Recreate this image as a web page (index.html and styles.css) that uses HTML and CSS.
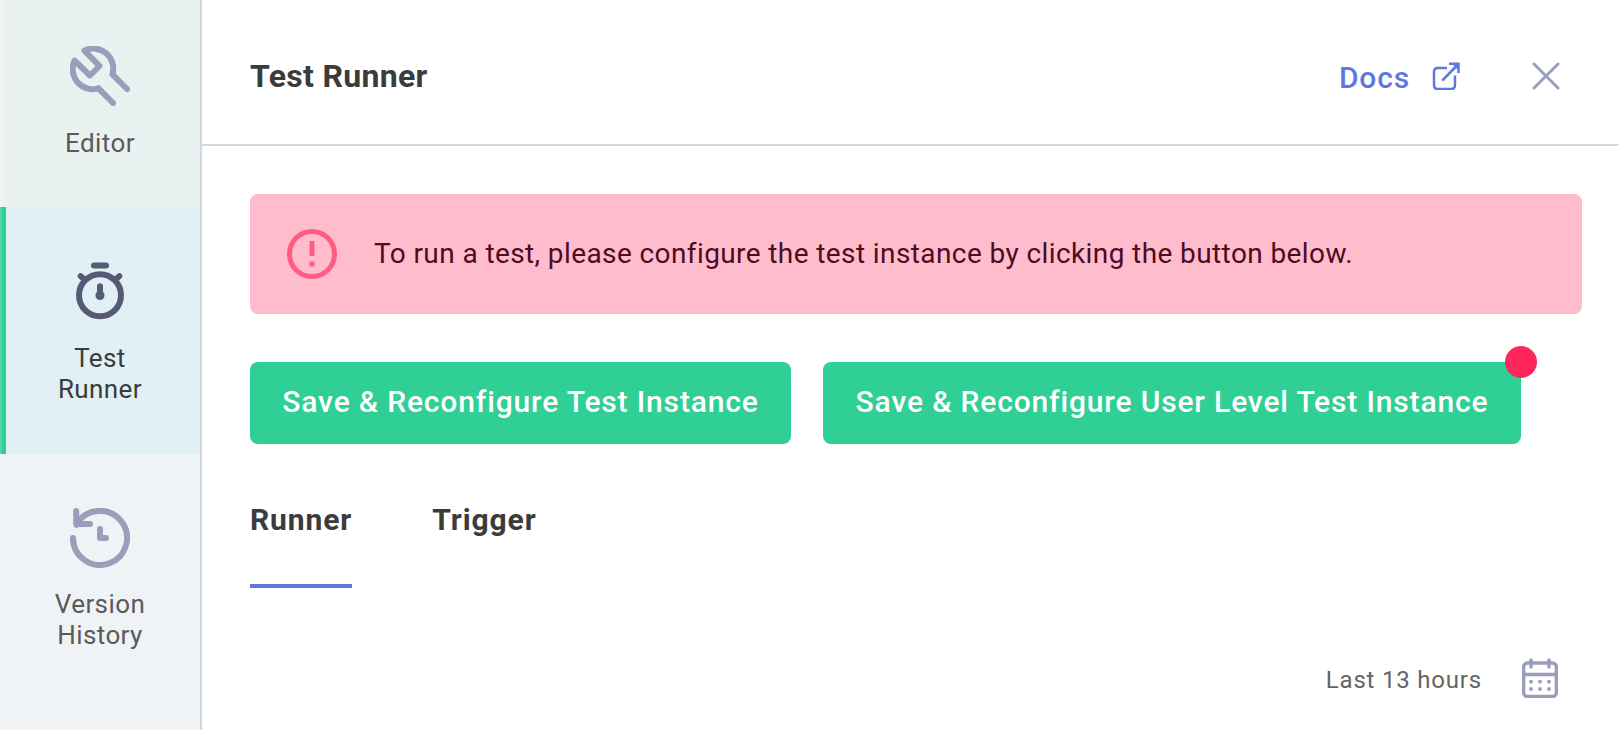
FILE: index.html
```
<!DOCTYPE html>
<html lang="en">
<head>
<meta charset="utf-8">
<title>Test Runner</title>
<link rel="stylesheet" href="styles.css">
</head>
<body>
<div class="app">
  <nav class="sidebar">
    <a class="nav-item nav-editor">
      <svg class="nav-icon" viewBox="0 0 60 60"><path d="M28.5 42.3A20 20 0 0 1 4.6 14.6L20 29.5 29.5 20 14.4 4.6A20 20 0 0 1 42.4 28.3L57 43M28.5 42.3L43 57"/></svg>
      <span>Editor</span>
    </a>
    <a class="nav-item nav-runner">
      <svg class="nav-icon" viewBox="0 0 60 60"><circle cx="30" cy="33.3" r="21"/><path d="M24 3.5H36M10.7 14.1L15 18M49.3 14.1L45 18M30 24.3V33"/><circle class="solid" cx="30" cy="33.5" r="4.5"/></svg>
      <span>Test<br>Runner</span>
    </a>
    <a class="nav-item nav-history">
      <svg class="nav-icon" viewBox="0 0 60 60"><path d="M3 30A27 27 0 1 0 6.4 16.8M6.2 3V16H20M30 21V30H36"/></svg>
      <span>Version<br>History</span>
    </a>
  </nav>
  <main class="main">
    <header class="header">
      <h1 class="title">Test Runner</h1>
      <a class="docs"><span class="docs-label">Docs</span>
        <svg class="icon-external" viewBox="0 0 28 28"><path d="M15 6H5.4A3.4 3.4 0 0 0 2 9.4V23.6A3.4 3.4 0 0 0 5.4 27H19.6A3.4 3.4 0 0 0 23 23.6V13.5M10.3 18.5L26 2.5M17 1.8H26.5V11"/><path class="solid" d="M20 2H26.5V8.5Z"/></svg>
      </a>
      <svg class="icon-close" viewBox="0 0 28 28"><path d="M2 2L26 26M26 2L2 26"/></svg>
    </header>
    <section class="content">
      <div class="alert">
        <svg class="icon-alert" viewBox="0 0 50 50"><circle cx="25" cy="25" r="22.5"/><path d="M25 12V27M25 32.5V37.5"/></svg>
        <span class="alert-text">To run a test, please configure the test instance by clicking the button below.</span>
      </div>
      <div class="actions">
        <button class="button button-test">Save &amp; Reconfigure Test Instance</button>
        <button class="button button-user">Save &amp; Reconfigure User Level Test Instance<i class="badge"></i></button>
      </div>
      <div class="tabs">
        <a class="tab active">Runner</a>
        <a class="tab">Trigger</a>
      </div>
      <div class="range">
        <span class="range-label">Last 13 hours</span>
        <svg class="icon-calendar" viewBox="0 0 36 40"><rect x="1.6" y="5" width="32.8" height="33.4" rx="4"/><path d="M2 16.5H34M9 2V9M27 2V9"/><g class="dots"><circle cx="9" cy="23.7" r="1.9"/><circle cx="18" cy="23.7" r="1.9"/><circle cx="27" cy="23.7" r="1.9"/><circle cx="9" cy="31" r="1.9"/><circle cx="18" cy="31" r="1.9"/><circle cx="27" cy="31" r="1.9"/></g></svg>
      </div>
    </section>
  </main>
</div>
</body>
</html>
```
FILE: styles.css
```
* { box-sizing: border-box; }
body { margin: 0; background: #fff; color: #3b3b3b; font-family: Roboto, sans-serif; }
svg { display: block; flex: none; fill: none; stroke: currentColor; stroke-linecap: round; stroke-linejoin: round; }
.app { display: flex; width: 1618px; height: 730px; overflow: hidden; }
.sidebar { display: flex; flex: none; flex-direction: column; width: 202px; background: #eff3f6; border-right: 2px solid #cfd8e0; }
.nav-item { display: flex; flex-direction: column; align-items: center; color: #5a5a5a; font-size: 26px; line-height: 31px; letter-spacing: 0.4px; text-align: center; box-shadow: inset 2px 0 rgba(255, 255, 255, 0.2); }
.nav-editor { height: 207px; padding-top: 46px; gap: 22px; background: #e9f2f1; }
.nav-runner { height: 247px; padding-top: 55px; gap: 21px; background: #e1f0f4; color: #3b3b3b; box-shadow: inset 2px 0 #50d6a6, inset 6px 0 #2fcf95; }
.nav-history { flex: 1; padding-top: 54px; gap: 21px; }
.nav-icon { width: 60px; height: 60px; color: #9b9eba; stroke-width: 6; }
.nav-runner .nav-icon { color: #575a75; }
.solid { fill: currentColor; stroke: none; }
.main { flex: 1; min-width: 0; }
.header { display: flex; align-items: center; height: 146px; padding: 8px 58px 0 48px; border-bottom: 2px solid #cfd8e0; }
.title { margin: 0; font-size: 32px; font-weight: 700; line-height: 38px; letter-spacing: 0.3px; }
.docs { display: flex; align-items: center; margin-left: auto; gap: 22px; color: #5e78e0; font-size: 30px; font-weight: 500; line-height: 36px; letter-spacing: 0.84px; }
.docs-label { padding-top: 4px; }
.icon-external { width: 28px; height: 28px; stroke-width: 2.5; stroke-linecap: butt; stroke-linejoin: miter; }
.icon-close { width: 28px; height: 28px; margin-left: 72px; color: #9b9eba; stroke-width: 3; }
.content { padding: 48px 36px 0 48px; }
.alert { display: flex; align-items: center; height: 120px; padding-left: 37px; gap: 37px; border-radius: 8px; background: #ffbccd; color: #4f0b1f; font-size: 28px; letter-spacing: 0.4px; white-space: nowrap; }
.alert-text { padding-bottom: 2px; }
.icon-alert { width: 50px; height: 50px; color: #ff5c84; stroke-width: 5; stroke-linecap: butt; }
.actions { display: flex; margin-top: 48px; gap: 32px; }
.button { position: relative; height: 82px; padding: 0 0 3px; border: 0; border-radius: 8px; background: #2fcf95; color: #fff; font: 500 30px Roboto, sans-serif; letter-spacing: 0.84px; white-space: nowrap; }
.button-test { width: 541px; }
.button-user { width: 698px; }
.badge { position: absolute; top: -16px; right: -16px; width: 32px; height: 32px; border-radius: 50%; background: #ff265b; }
.tabs { display: flex; margin-top: 57px; gap: 80px; }
.tab { height: 87px; border-bottom: 4px solid transparent; font-size: 30px; font-weight: 700; line-height: 37px; letter-spacing: 0.9px; }
.tab.active { border-color: #5e78e0; }
.range { display: flex; align-items: center; justify-content: flex-end; margin-top: 70px; padding-right: 24px; gap: 40px; color: #656565; font-size: 24px; letter-spacing: 0.8px; }
.range-label { padding-top: 3px; }
.icon-calendar { width: 36px; height: 40px; color: #9b9eba; stroke-width: 3.5; }
.dots { fill: currentColor; stroke: none; }
```
